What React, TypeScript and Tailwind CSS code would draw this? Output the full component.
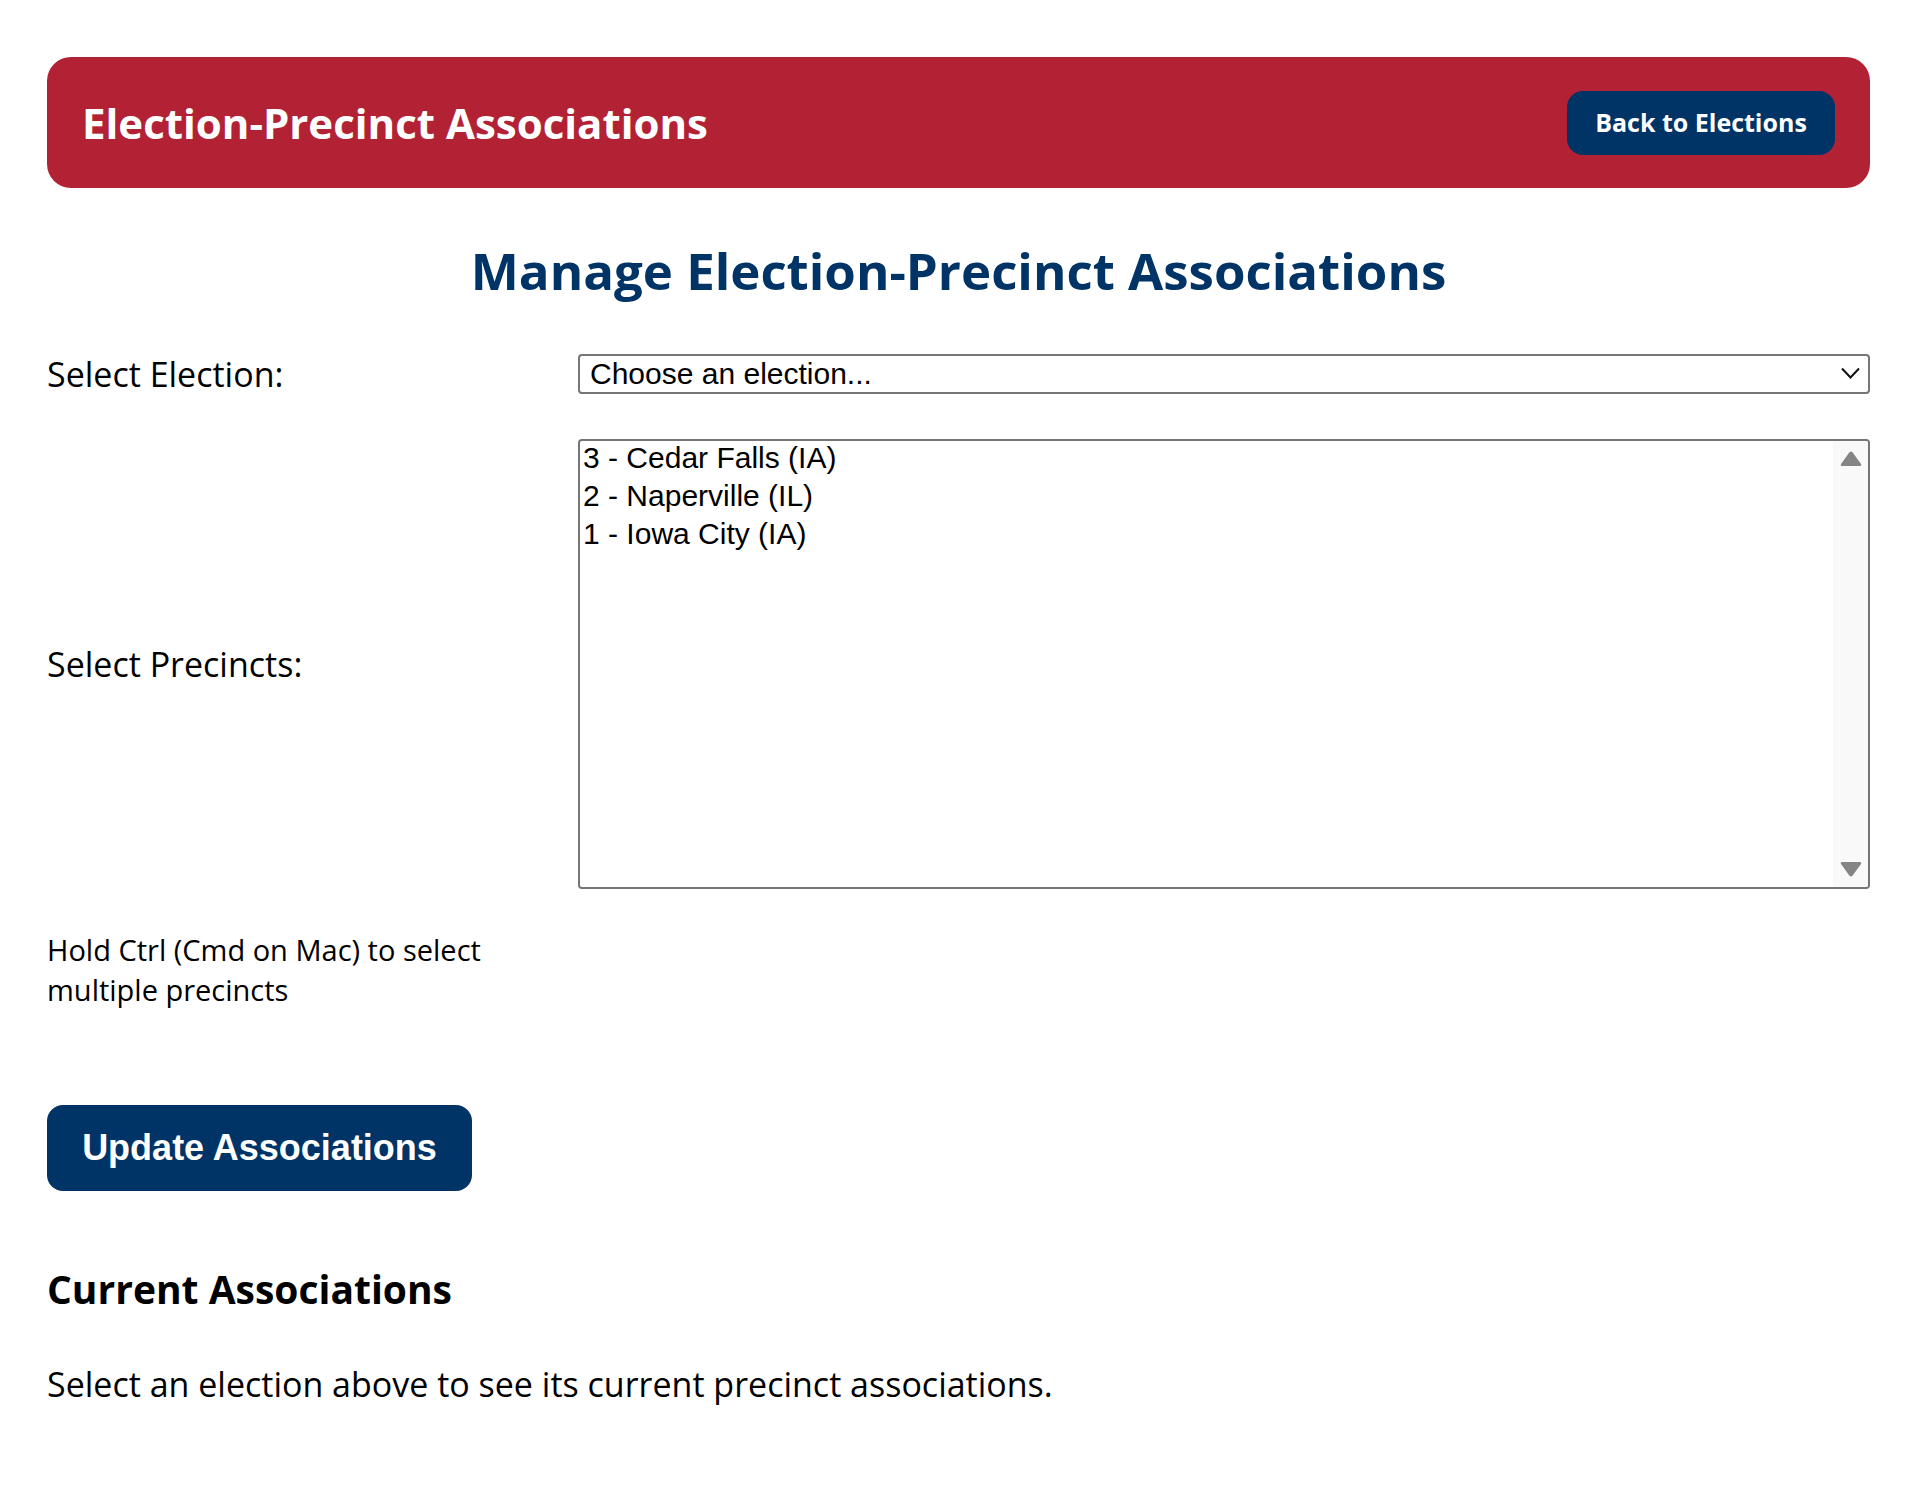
import { useState } from "react";

const precincts = [
  { id: 3, name: "Cedar Falls", state: "IA" },
  { id: 2, name: "Naperville", state: "IL" },
  { id: 1, name: "Iowa City", state: "IA" },
];

const App = () => {
  const [election, setElection] = useState("");
  const [selected, setSelected] = useState<number[]>([]);

  const toggle = (id: number) =>
    setSelected((s) => (s.includes(id) ? s.filter((x) => x !== id) : [...s, id]));

  return (
    <div className="min-h-screen bg-white pt-[57px] pl-[47px] pr-[59px] pb-[80px] font-['Open_Sans',sans-serif] text-black">
      {/* Header bar */}
      <header className="flex h-[131px] items-center justify-between rounded-[24px] bg-[#b22234] px-[35px]">
        <h1 className="text-[42px] font-bold leading-none text-white">Election-Precinct Associations</h1>
        <button className="flex h-[64px] w-[268px] items-center justify-center rounded-[16px] bg-[#003366] text-[25px] font-bold text-white">
          Back to Elections
        </button>
      </header>

      <h2 className="mt-[46px] text-center text-[51px] font-bold leading-[72px] text-[#003366]">
        Manage Election-Precinct Associations
      </h2>

      {/* Election select */}
      <div className="mt-[44px] flex items-center">
        <label className="w-[531px] shrink-0 text-[34px] leading-[48px]">Select Election:</label>
        <div className="relative flex-1">
          <select
            value={election}
            onChange={(e) => setElection(e.target.value)}
            className="h-[40px] w-full appearance-none rounded-[4px] border-2 border-[#767676] bg-white pl-[10px] font-['Liberation_Sans',Arial,sans-serif] text-[30px] leading-none text-black"
          >
            <option value="">Choose an election...</option>
          </select>
          <svg
            className="pointer-events-none absolute right-[10px] top-[13px] h-[13px] w-[19px]"
            viewBox="0 0 19 13"
            fill="none"
            stroke="#111"
            strokeWidth="2"
          >
            <path d="M1 1.5 L9.5 10.5 L18 1.5" />
          </svg>
        </div>
      </div>

      {/* Precinct multi-select */}
      <div className="mt-[41px] flex items-center">
        <label className="w-[531px] shrink-0 text-[34px] leading-[48px]">Select Precincts:</label>
        <div className="flex h-[450px] flex-1 overflow-hidden rounded-[4px] border-2 border-[#767676] bg-white">
          <div role="listbox" aria-multiselectable="true" className="flex-1 pl-[3px] font-['Liberation_Sans',Arial,sans-serif] text-[30px]">
            {precincts.map((p) => (
              <div
                key={p.id}
                role="option"
                aria-selected={selected.includes(p.id)}
                onClick={() => toggle(p.id)}
                className={
                  selected.includes(p.id)
                    ? "h-[38px] leading-[33px] bg-[#cecece]"
                    : "h-[38px] leading-[33px]"
                }
              >
                {p.id} - {p.name} ({p.state})
              </div>
            ))}
          </div>
          <div className="flex w-[35px] flex-col items-center justify-between bg-[#f9f9f9] py-[10px]">
            <svg className="h-[16px] w-[22px]" viewBox="0 0 22 16" fill="#858585">
              <path d="M9.3 1.6 Q11 -0.4 12.7 1.6 L21 13 Q22 15 19.5 15 L2.5 15 Q0 15 1 13 Z" />
            </svg>
            <svg className="h-[16px] w-[22px]" viewBox="0 0 22 16" fill="#858585">
              <path d="M9.3 14.4 Q11 16.4 12.7 14.4 L21 3 Q22 1 19.5 1 L2.5 1 Q0 1 1 3 Z" />
            </svg>
          </div>
        </div>
      </div>

      <p className="mt-[41px] w-[500px] text-[29px] leading-[40px]">
        Hold Ctrl (Cmd on Mac) to select multiple precincts
      </p>

      <button className="mt-[95px] flex h-[86px] w-[425px] items-center justify-center rounded-[16px] bg-[#003366] font-['Liberation_Sans',Arial,sans-serif] text-[36px] font-bold text-white">
        Update Associations
      </button>

      <h3 className="mt-[70px] text-[39px] font-bold leading-[56px]">Current Associations</h3>

      <p className="mt-[43px] text-[34px] leading-[48px]">
        Select an election above to see its current precinct associations.
      </p>
    </div>
  );
};

export default App;
